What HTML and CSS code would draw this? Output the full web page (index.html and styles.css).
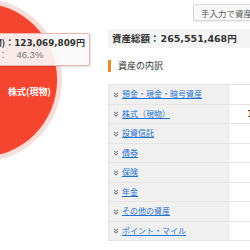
FILE: index.html
```html
<!DOCTYPE html>
<html>
  <head>
    <title>資産の内訳</title>
    <meta charset="UTF-8" />
    <link rel="stylesheet" href="styles.css">
  </head>
  <body>
    <div class="page">
      <div class="chart">
        <div class="pie"></div>
        <div class="pie-label">株式(現物)</div>
        <div class="tooltip">
          <div class="tip-main">株式(現物)：<span class="num">123,069,809</span>円</div>
          <div class="tip-sub">構成比率：<span class="num-sub">46.3%</span></div>
        </div>
      </div>

      <div class="side">
        <div class="tools">
          <button class="manual-btn">手入力で資産を登録する</button>
        </div>

        <div class="total">資産総額：<span class="num">265,551,468</span>円</div>

        <h2 class="section-title">資産の内訳</h2>

        <table class="breakdown">
          <tbody>
            <tr><th><svg class="chev" viewBox="0 0 6 6"><polyline points="1,0.8 3,2.6 5,0.8" /><polyline points="1,3.2 3,5 5,3.2" /></svg><a href="#">預金・現金・暗号資産</a></th><td>8,120,000円</td></tr>
            <tr><th><svg class="chev" viewBox="0 0 6 6"><polyline points="1,0.8 3,2.6 5,0.8" /><polyline points="1,3.2 3,5 5,3.2" /></svg><a href="#">株式（現物）</a></th><td>123,069,809円</td></tr>
            <tr><th><svg class="chev" viewBox="0 0 6 6"><polyline points="1,0.8 3,2.6 5,0.8" /><polyline points="1,3.2 3,5 5,3.2" /></svg><a href="#">投資信託</a></th><td>9,800,000円</td></tr>
            <tr><th><svg class="chev" viewBox="0 0 6 6"><polyline points="1,0.8 3,2.6 5,0.8" /><polyline points="1,3.2 3,5 5,3.2" /></svg><a href="#">債券</a></th><td>5,000,000円</td></tr>
            <tr><th><svg class="chev" viewBox="0 0 6 6"><polyline points="1,0.8 3,2.6 5,0.8" /><polyline points="1,3.2 3,5 5,3.2" /></svg><a href="#">保険</a></th><td>3,000,000円</td></tr>
            <tr><th><svg class="chev" viewBox="0 0 6 6"><polyline points="1,0.8 3,2.6 5,0.8" /><polyline points="1,3.2 3,5 5,3.2" /></svg><a href="#">年金</a></th><td>2,500,000円</td></tr>
            <tr><th><svg class="chev" viewBox="0 0 6 6"><polyline points="1,0.8 3,2.6 5,0.8" /><polyline points="1,3.2 3,5 5,3.2" /></svg><a href="#">その他の資産</a></th><td>1,200,000円</td></tr>
            <tr><th><svg class="chev" viewBox="0 0 6 6"><polyline points="1,0.8 3,2.6 5,0.8" /><polyline points="1,3.2 3,5 5,3.2" /></svg><a href="#">ポイント・マイル</a></th><td>61,659円</td></tr>
          </tbody>
        </table>
      </div>
    </div>
  </body>
</html>
```

FILE: styles.css
```css
/* 資産の内訳 */
body {
  margin: 0;
  overflow: hidden;
  font-family: "Noto Sans CJK JP", sans-serif;
  color: #333;
  background: #fff;
}

.page {
  display: flex;
  width: 250px;
  height: 250px;
  overflow: hidden;
}

/* グラフ */
.chart {
  position: relative;
  width: 108px;
  flex-shrink: 0;
  height: 250px;
}

.pie {
  position: absolute;
  left: -97px;
  top: 3px;
  width: 154px;
  height: 154px;
  border-radius: 50%;
  background-color: #f5452f;
  box-shadow: 0 0 0 1px #f9c9bf, 0 0 0 5px rgba(240, 200, 195, 0.6);
}

.pie-label {
  position: absolute;
  left: 8px;
  top: 85px;
  font-size: 9px;
  font-weight: bold;
  color: #fff;
  white-space: nowrap;
}

.tooltip {
  position: absolute;
  right: 18px;
  top: 33px;
  padding: 3px 4px 5px 4px;
  background-color: rgba(250, 250, 250, 0.92);
  border: 1px solid #e9b4ab;
  border-radius: 2px;
  box-shadow: 1px 1px 2px rgba(0, 0, 0, 0.12);
  white-space: nowrap;
  line-height: 11px;
}

.tip-main {
  font-size: 9px;
  font-weight: bold;
  color: #333;
}

.tip-main .num {
  font-family: "DejaVu Sans", sans-serif;
  font-size: 8.8px;
}

.tip-sub {
  font-size: 9px;
  color: #777;
}

.tip-sub .num-sub {
  font-family: "Liberation Sans", sans-serif;
  font-size: 9.5px;
  margin-left: 9px;
}

/* 右側 */
.side {
  width: 230px;
  flex-shrink: 0;
}

.tools {
  display: flex;
  margin-top: 4px;
  padding-left: 85px;
}

.manual-btn {
  height: 17px;
  padding: 0 7px;
  border: 1px solid #d8d8d8;
  border-radius: 2px;
  background-color: #f8f8f8;
  box-shadow: 0 1px 1px rgba(0, 0, 0, 0.08);
  font-family: "Noto Sans CJK JP", sans-serif;
  font-size: 8.5px;
  color: #555;
  white-space: nowrap;
}

.total {
  margin-top: 8px;
  height: 19px;
  line-height: 19px;
  padding-left: 4px;
  background-color: #f4f4f4;
  font-size: 9.5px;
  font-weight: bold;
  color: #333;
  white-space: nowrap;
}

.total .num {
  font-family: "DejaVu Sans", sans-serif;
  margin-left: 1px;
}

.section-title {
  margin: 12px 0 0 0;
  height: 12px;
  line-height: 12px;
  padding-left: 7px;
  border-left: 3px solid #e8892b;
  font-size: 9px;
  font-weight: normal;
  color: #333;
}

.breakdown {
  margin-top: 12px;
  border-collapse: collapse;
  width: 220px;
}

.breakdown th,
.breakdown td {
  height: 18.5px;
  padding: 0;
  border: 1px solid #e4e4e4;
  white-space: nowrap;
  line-height: 18px;
}

.breakdown th {
  width: 119px;
  text-align: left;
  font-weight: normal;
  font-size: 8px;
  background-color: #f0f0f0;
}

.breakdown td {
  text-align: right;
  padding-right: 10px;
  font-family: "DejaVu Sans", "Noto Sans CJK JP", sans-serif;
  font-size: 9.5px;
  color: #333;
}

.breakdown a {
  font-size: 8px;
  color: #1f73d0;
  text-decoration: underline;
}

.chev {
  width: 6px;
  height: 6px;
  margin: 0 3px 0 4px;
  vertical-align: -0.5px;
  fill: none;
  stroke: #8a8a8a;
  stroke-width: 1.1;
}
```
